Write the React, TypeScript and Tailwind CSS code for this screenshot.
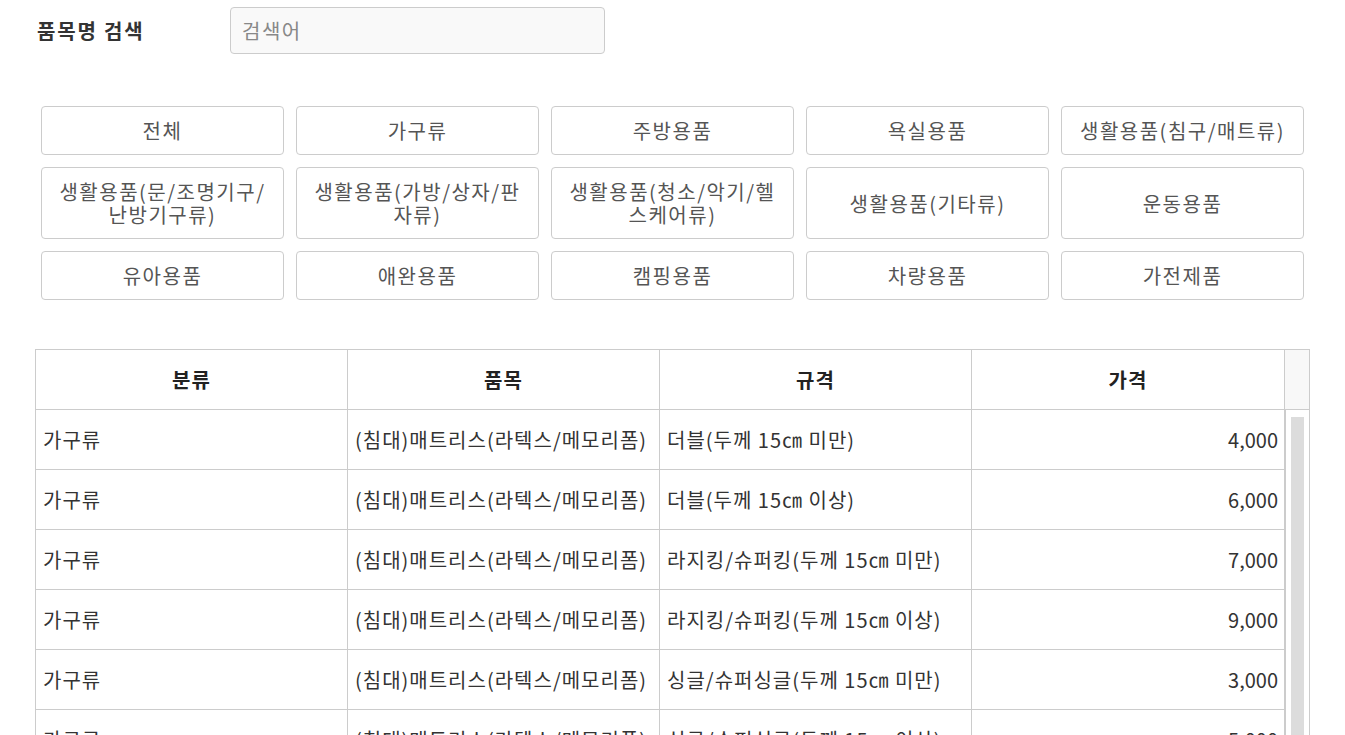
import React from "react";

const categories: React.ReactNode[] = [
  "전체",
  "가구류",
  "주방용품",
  "욕실용품",
  "생활용품(침구/매트류)",
  <>생활용품(문/조명기구/<br />난방기구류)</>,
  <>생활용품(가방/상자/판<br />자류)</>,
  <>생활용품(청소/악기/헬<br />스케어류)</>,
  "생활용품(기타류)",
  "운동용품",
  "유아용품",
  "애완용품",
  "캠핑용품",
  "차량용품",
  "가전제품",
];

const rows = [
  ["가구류", "(침대)매트리스(라텍스/메모리폼)", "더블(두께 15㎝ 미만)", "4,000"],
  ["가구류", "(침대)매트리스(라텍스/메모리폼)", "더블(두께 15㎝ 이상)", "6,000"],
  ["가구류", "(침대)매트리스(라텍스/메모리폼)", "라지킹/슈퍼킹(두께 15㎝ 미만)", "7,000"],
  ["가구류", "(침대)매트리스(라텍스/메모리폼)", "라지킹/슈퍼킹(두께 15㎝ 이상)", "9,000"],
  ["가구류", "(침대)매트리스(라텍스/메모리폼)", "싱글/슈퍼싱글(두께 15㎝ 미만)", "3,000"],
  ["가구류", "(침대)매트리스(라텍스/메모리폼)", "싱글/슈퍼싱글(두께 15㎝ 이상)", "5,000"],
  ["가구류", "(침대)매트리스(라텍스/메모리폼)", "퀸/킹(두께 15㎝ 미만)", "5,000"],
];

export default function App() {
  return (
    <div className="h-[735px] overflow-hidden bg-white font-['Noto_Sans_CJK_KR',sans-serif] text-[#333]">
      <div className="w-[1310px] pl-[35px] pt-[7px]">
        {/* search */}
        <div className="flex items-center h-[47px]">
          <label className="w-[195px] pl-[2px] text-[20px] font-bold leading-[24px] tracking-[1.8px] text-[#333]">
            품목명 검색
          </label>
          <input
            type="text"
            placeholder="검색어"
            className="w-[375px] h-[47px] rounded-[4px] border border-[#ccc] bg-[#f9f9f9] px-[11px] text-[20px] tracking-[1.5px] outline-none placeholder:text-[#888]"
          />
        </div>

        {/* category buttons */}
        <div className="mt-[52px] mx-[6px] grid grid-cols-5 gap-[12px]">
          {categories.map((c, i) => (
            <button
              key={i}
              className="rounded-[4px] border border-[#ccc] bg-white px-[6px] py-[12px] text-[20px] leading-[23px] tracking-[1.5px] text-[#555] text-center whitespace-nowrap"
            >
              {c}
            </button>
          ))}
        </div>

        {/* table */}
        <div className="mt-[49px] w-[1275px] border border-[#ccc]">
          <div className="flex h-[60px] border-b border-[#ccc]">
            {["분류", "품목", "규격"].map((h) => (
              <div
                key={h}
                className="w-[312px] border-r border-[#ccc] flex items-center justify-center text-[20px] font-bold tracking-[1px] text-[#222]"
              >
                {h}
              </div>
            ))}
            <div className="w-[313px] border-r border-[#ccc] flex items-center justify-center text-[20px] font-bold tracking-[1px] text-[#222]">
              가격
            </div>
            <div className="flex-1 bg-[#f8f8f8]" />
          </div>
          <div className="flex h-[400px] overflow-hidden">
            <div className="w-[1249px]">
              {rows.map((r, i) => (
                <div key={i} className="flex h-[60px] border-b border-[#ccc] text-[20px] tracking-[1px]">
                  <div className="w-[312px] border-r border-[#ccc] flex items-center px-[7px]">{r[0]}</div>
                  <div className="w-[312px] border-r border-[#ccc] flex items-center px-[7px] whitespace-nowrap">{r[1]}</div>
                  <div className="w-[312px] border-r border-[#ccc] flex items-center px-[7px] whitespace-nowrap">{r[2]}</div>
                  <div className="w-[313px] border-r border-[#ccc] flex items-center justify-end px-[6px] tracking-normal">{r[3]}</div>
                </div>
              ))}
            </div>
            <div className="flex-1 border-l border-[#ccc] pt-[7px] pl-[5px]">
              <div className="w-[13px] h-[380px] bg-[#dcdcdc]" />
            </div>
          </div>
        </div>
      </div>
    </div>
  );
}
